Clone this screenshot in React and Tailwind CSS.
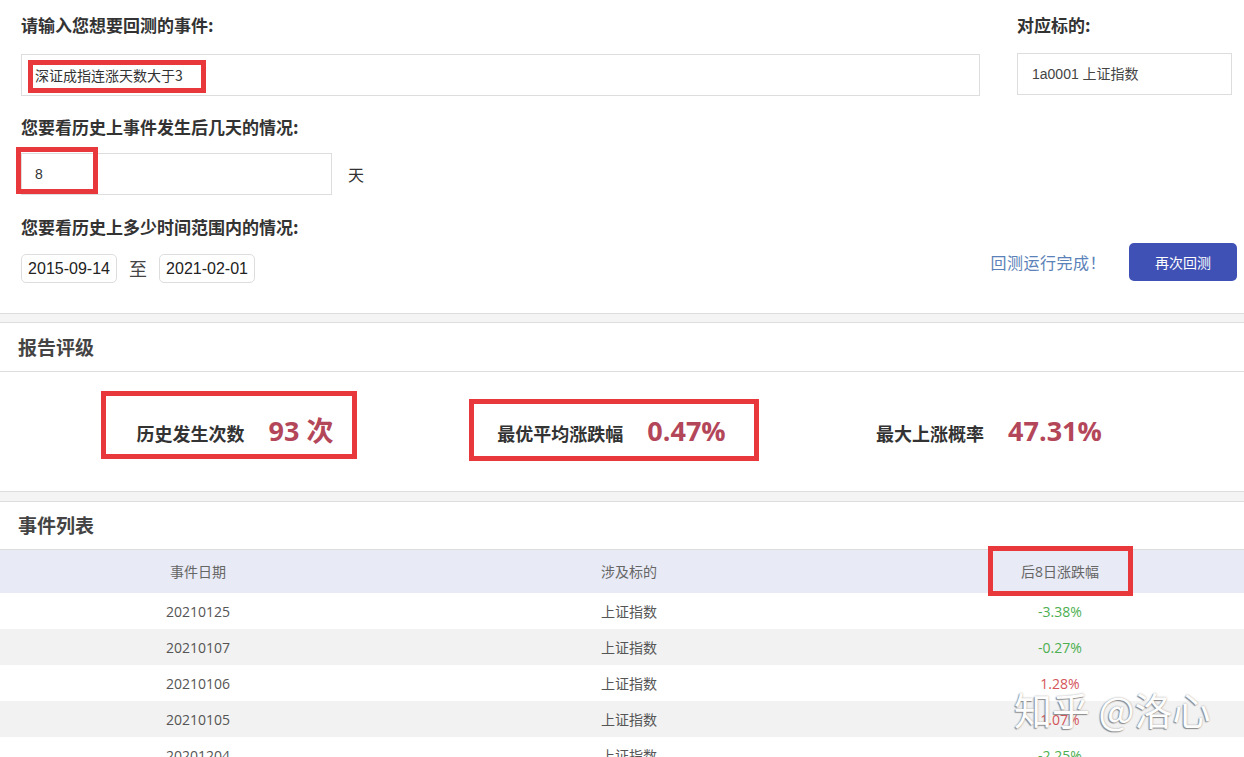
import React from 'react';

const rows = [
  { date: '20210125', name: '上证指数', pct: '-3.38%', up: false },
  { date: '20210107', name: '上证指数', pct: '-0.27%', up: false },
  { date: '20210106', name: '上证指数', pct: '1.28%', up: true },
  { date: '20210105', name: '上证指数', pct: '1.07%', up: true },
  { date: '20201204', name: '上证指数', pct: '-2.25%', up: false },
  { date: '20201203', name: '上证指数', pct: '-1.94%', up: false },
];

function Label({ children }) {
  return (
    <div className="h-5 leading-5 text-[17px] font-bold text-[#333] whitespace-nowrap">{children}</div>
  );
}

function Stat({ label, value, box }) {
  return (
    <div className="relative flex items-baseline gap-[24px] whitespace-nowrap">
      <span className="text-[18px] font-bold text-[#333] leading-[36px]">{label}</span>
      <span className="text-[27px] font-bold text-[#b4465a] leading-[36px] font-['Open_Sans','Noto_Sans_CJK_SC',sans-serif]">{value}</span>
      {box}
    </div>
  );
}

export default function App() {
  return (
    <div className="relative h-[757px] overflow-hidden bg-white text-[#333] font-['Noto_Sans_CJK_SC',sans-serif]">
      {/* form */}
      <section className="pl-[21px] pr-[7px] pt-[15px] pb-[30px]">
        <div className="flex gap-[37px]">
          <div className="w-[959px]">
            <Label>请输入您想要回测的事件:</Label>
            <div className="relative mt-[19px] h-[42px] border border-[#ddd] flex items-center pl-[13px] text-[14px] text-[#333]">
              深证成指连涨天数大于3
              <div className="absolute left-[6px] top-[5px] w-[178px] h-[33px] border-[5px] border-[#e8383b]" />
            </div>
          </div>
          <div className="w-[215px]">
            <Label>对应标的:</Label>
            <div className="mt-[18px] h-[42px] border border-[#ddd] flex items-center pl-[14px] text-[14px] text-[#444] font-['Liberation_Sans','Noto_Sans_CJK_SC',sans-serif]">
              1a0001 上证指数
            </div>
          </div>
        </div>

        <div className="mt-[21px]">
          <Label>您要看历史上事件发生后几天的情况:</Label>
        </div>
        <div className="mt-[16px] flex items-center">
          <div className="relative w-[311px] h-[42px] border border-[#ddd] flex items-center pl-[13px] text-[14px] font-['Liberation_Sans',sans-serif]">
            8
            <div className="absolute -left-[6px] -top-[7px] w-[82px] h-[47px] border-[5px] border-[#e8383b]" />
          </div>
          <span className="ml-[16px] text-[16px]">天</span>
        </div>

        <div className="mt-[22px]">
          <Label>您要看历史上多少时间范围内的情况:</Label>
        </div>
        <div className="mt-[6px] flex items-end justify-between">
          <div className="flex items-center font-['Liberation_Sans','Noto_Sans_CJK_SC',sans-serif]">
            <div className="h-[29px] w-[96px] border border-[#ddd] rounded-[5px] flex items-center justify-center text-[16px] text-[#222]">2015-09-14</div>
            <span className="mx-[12px] text-[18px] text-[#444] font-['Noto_Sans_CJK_SC',sans-serif]">至</span>
            <div className="h-[29px] w-[96px] border border-[#ddd] rounded-[5px] flex items-center justify-center text-[16px] text-[#222]">2021-02-01</div>
          </div>
          <div className="flex items-center gap-[23px] mb-[2px]">
            <span className="text-[16px] text-[#5b82b8] tracking-[0.5px]">回测运行完成！</span>
            <button className="w-[108px] h-[38px] rounded-[5px] bg-[#3f51b5] text-white text-[14px]">再次回测</button>
          </div>
        </div>
      </section>

      <div className="h-[10px] bg-[#f4f4f4] border-y border-[#ddd]" />

      {/* report */}
      <div className="h-[49px] border-b border-[#ddd] flex items-center pl-[18px] text-[19px] font-bold text-[#444]">报告评级</div>
      <div className="h-[119px] grid grid-cols-[470px_283px_472px] items-center justify-items-center">
        <Stat
          label="历史发生次数"
          value="93 次"
          box={<div className="absolute -left-[36px] -right-[24px] -top-[22px] -bottom-[8px] border-[5px] border-[#e8383b]" />}
        />
        <Stat
          label="最优平均涨跌幅"
          value="0.47%"
          box={<div className="absolute -left-[28px] -right-[33px] -top-[14px] -bottom-[10px] border-[5px] border-[#e8383b]" />}
        />
        <Stat label="最大上涨概率" value="47.31%" />
      </div>

      <div className="h-[11px] bg-[#f4f4f4] border-y border-[#ddd]" />

      {/* events */}
      <div className="h-[48px] border-b border-[#ddd] flex items-center pl-[18px] text-[19px] font-bold text-[#444]">事件列表</div>
      <div className="text-[14px] font-['Open_Sans','Noto_Sans_CJK_SC',sans-serif]">
        <div className="h-[43px] bg-[#e8eaf5] grid grid-cols-[396px_466px_1fr] items-center text-center text-[#666]">
          <div>事件日期</div>
          <div>涉及标的</div>
          <div className="pl-[14px] flex justify-center">
            <div className="relative">
              后8日涨跌幅
              <div className="absolute -left-[33px] -right-[34px] -top-[15px] -bottom-[14px] border-[5px] border-[#e8383b]" />
            </div>
          </div>
        </div>
        {rows.map((r, i) => (
          <div
            key={r.date}
            className={`h-9 grid grid-cols-[396px_466px_1fr] items-center text-center ${i % 2 === 1 ? 'bg-[#f2f2f2]' : 'bg-white'}`}
          >
            <div className="text-[#555]">{r.date}</div>
            <div className="text-[#555]">{r.name}</div>
            <div className={`pl-[14px] ${r.up ? 'text-[#d4545a]' : 'text-[#4caf50]'}`}>{r.pct}</div>
          </div>
        ))}
      </div>

      {/* watermark */}
      <div className="absolute left-[1014px] top-[683px] text-[38px] leading-[52px] text-[#fdfdfd] whitespace-nowrap [text-shadow:-1px_1px_1px_#8a8a8a,0_0_2px_rgba(0,0,0,0.35)]">
        知乎 @洛心
      </div>
    </div>
  );
}
